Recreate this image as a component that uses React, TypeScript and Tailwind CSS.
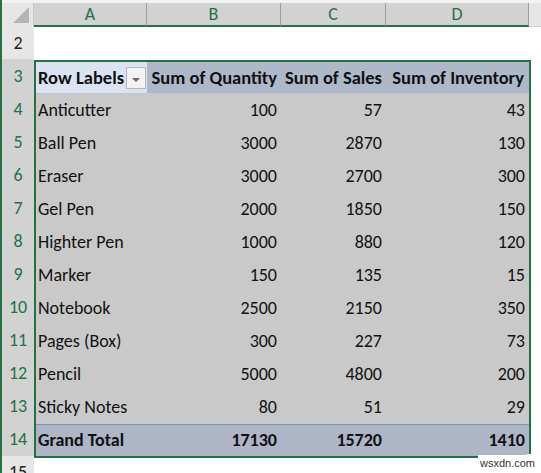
import React from "react";

const rows: [string, number, number, number][] = [
  ["Anticutter", 100, 57, 43],
  ["Ball Pen", 3000, 2870, 130],
  ["Eraser", 3000, 2700, 300],
  ["Gel Pen", 2000, 1850, 150],
  ["Highter Pen", 1000, 880, 120],
  ["Marker", 150, 135, 15],
  ["Notebook", 2500, 2150, 350],
  ["Pages (Box)", 300, 227, 73],
  ["Pencil", 5000, 4800, 200],
  ["Sticky Notes", 80, 51, 29],
];

const font = { fontFamily: "Calibri, Carlito, 'Open Sans', 'Noto Sans', sans-serif" };

function RowHead({ n, sel }: { n: number; sel: boolean }) {
  return (
    <div
      className={`h-[33px] flex items-center justify-center border-b border-[#d4d4d4] text-[18px] ${
        sel ? "bg-[#d2d2d2] text-[#217346]" : "bg-[#e6e6e6] text-[#222]"
      }`}
    >
      {n}
    </div>
  );
}

export default function App() {
  return (
    <div className="w-[541px] h-[473px] overflow-hidden bg-white relative border-l-2 border-[#217346]" style={font}>
      <div className="h-[3px] bg-[#f3f3f3]" />
      {/* Column header */}
      <div className="flex h-[24px]">
        <div className="w-[32px] bg-[#e6e6e6] border-r border-[#c8c8c8] relative">
          <div className="absolute right-[4px] bottom-[4px] w-0 h-0 border-l-[16px] border-l-transparent border-b-[16px] border-b-[#b5b5b5]" />
        </div>
        {[
          ["A", "w-[113px]"],
          ["B", "w-[134px]"],
          ["C", "w-[105px]"],
          ["D", "w-[143px]"],
        ].map(([l, w]) => (
          <div
            key={l}
            className={`${w} bg-[#d2d2d2] border-r border-[#9e9e9e] border-b-2 border-b-[#217346] flex items-center justify-center text-[18px] text-[#217346]`}
          >
            {l}
          </div>
        ))}
        <div className="flex-1 bg-[#e6e6e6] border-b border-[#d0d0d0]" />
      </div>
      {/* Body */}
      <div className="flex">
        <div className="w-[32px] flex flex-col">
          <RowHead n={2} sel={false} />
          {Array.from({ length: 12 }, (_, i) => (
            <RowHead key={i} n={i + 3} sel />
          ))}
          <RowHead n={15} sel={false} />
        </div>
        <div className="w-[497px] flex flex-col">
          <div className="h-[33px] bg-white" />
          <div className="border-2 border-[#217346] relative text-[18px] text-[#111]">
            <div className="flex h-[31px] items-center font-bold text-[18.5px]">
              <div className="w-[111px] h-full bg-[#dbe3f2] flex items-center pl-[2px] justify-between pr-[1px]">
                <span>Row Labels</span>
                <span className="w-[20px] h-[22px] bg-[#f3f3f3] border border-[#b8b8b8] flex items-end justify-center pb-[6px]">
                  <span className="w-0 h-0 border-l-[4px] border-r-[4px] border-t-[4px] border-l-transparent border-r-transparent border-t-[#666]" />
                </span>
              </div>
              <div className="w-[134px] h-full bg-[#adb8c9] flex items-center justify-end pr-[4px]">Sum of Quantity</div>
              <div className="w-[105px] h-full bg-[#adb8c9] flex items-center justify-end pr-[4px]">Sum of Sales</div>
              <div className="w-[143px] h-full bg-[#adb8c9] flex items-center justify-end pr-[5px]">Sum of Inventory</div>
            </div>
            <div className="bg-[#c9c9c9] border-t border-[#c0c6d2]">
              {rows.map((r) => (
                <div key={r[0]} className="flex h-[33px] items-center">
                  <div className="w-[111px] pl-[2px]">{r[0]}</div>
                  <div className="w-[134px] text-right pr-[4px]">{r[1]}</div>
                  <div className="w-[105px] text-right pr-[4px]">{r[2]}</div>
                  <div className="w-[143px] text-right pr-[4px]">{r[3]}</div>
                </div>
              ))}
            </div>
            <div className="flex h-[32px] items-center font-bold bg-[#adb5c6] border-t border-[#8093b3]">
              <div className="w-[111px] pl-[2px]">Grand Total</div>
              <div className="w-[134px] text-right pr-[4px]">17130</div>
              <div className="w-[105px] text-right pr-[4px]">15720</div>
              <div className="w-[143px] text-right pr-[4px]">1410</div>
            </div>
            <div className="absolute -right-[5px] -bottom-[5px] w-[7px] h-[7px] bg-[#217346] border border-white" />
          </div>
          <div className="h-[33px] bg-white" />
        </div>
      </div>
      <div className="absolute right-[4px] bottom-[2px] text-[11px] text-[#333] bg-white px-[2px]" style={{ fontFamily: "'Liberation Sans', Arial, sans-serif" }}>
        wsxdn.com
      </div>
    </div>
  );
}
